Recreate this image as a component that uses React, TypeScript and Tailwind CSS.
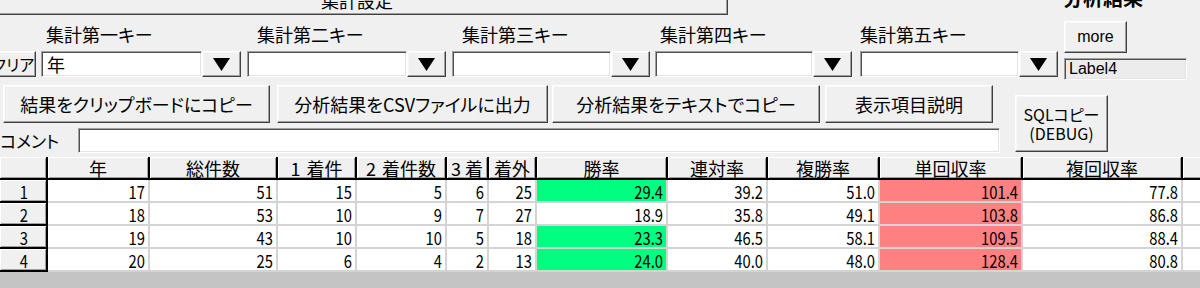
import React from "react";

const raised =
  "bg-[#f0f0f0] border border-t-white border-l-white border-r-[#404040] border-b-[#404040] shadow-[inset_-1px_-1px_0_#a0a0a0,inset_1px_1px_0_#f8f8f8]";
const sunken =
  "border border-t-[#a0a0a0] border-l-[#a0a0a0] border-r-white border-b-white shadow-[inset_1px_1px_0_#505050,inset_-1px_-1px_0_#e3e3e3]";

function Arrow() {
  return (
    <svg width="17" height="13" viewBox="0 0 17 13">
      <polygon points="0,0 17,0 8.5,13" fill="black" />
    </svg>
  );
}

function Combo({
  cls,
  labelCls,
  label,
  value,
}: {
  cls: string;
  labelCls: string;
  label: string;
  value?: string;
}) {
  return (
    <div className={`flex flex-col shrink-0 ${cls}`}>
      <div className={`h-[36px] pt-[10px] text-[18px] leading-[18px] whitespace-nowrap ${labelCls}`}>{label}</div>
      <div className="h-[26px] flex">
        <div className={`flex-1 bg-white ${sunken} text-[18px] leading-none flex items-center pl-[5px]`}>{value}</div>
        <div className={`w-[39px] shrink-0 ${raised} flex items-center justify-center`}>
          <Arrow />
        </div>
      </div>
    </div>
  );
}

const widths = [
  "w-[48px]",
  "w-[102px]",
  "w-[128px]",
  "w-[79px]",
  "w-[90px]",
  "w-[42px]",
  "w-[48px]",
  "w-[131px]",
  "w-[100px]",
  "w-[112px]",
  "w-[143px]",
  "w-[160px]",
  "w-[80px]",
];

const headers: React.ReactNode[] = [
  "",
  "年",
  "総件数",
  <>
    <span className="mr-[6px]">1</span>着件
  </>,
  <>
    <span className="mr-[6px]">2</span>着件数
  </>,
  <>
    <span className="mr-[4px]">3</span>着
  </>,
  "着外",
  "勝率",
  "連対率",
  "複勝率",
  "単回収率",
  "複回収率",
  "",
];

const rows = [
  ["1", "17", "51", "15", "5", "6", "25", "29.4", "39.2", "51.0", "101.4", "77.8", ""],
  ["2", "18", "53", "10", "9", "7", "27", "18.9", "35.8", "49.1", "103.8", "86.8", ""],
  ["3", "19", "43", "10", "10", "5", "18", "23.3", "46.5", "58.1", "109.5", "88.4", ""],
  ["4", "20", "25", "6", "4", "2", "13", "24.0", "40.0", "48.0", "128.4", "80.8", ""],
];

const fixedCell =
  "bg-[#f0f0f0] border-r-2 border-b-2 border-black shadow-[inset_1px_1px_0_#fff,inset_-1px_-1px_0_#a0a0a0]";

function Num({ v }: { v: string }) {
  return <span className="inline-block scale-x-[0.82] origin-right text-[18px] leading-none">{v}</span>;
}

export default function App() {
  return (
    <div className="w-[1200px] h-[288px] overflow-hidden bg-[#f0f0f0] font-['Noto_Sans_CJK_JP','Noto_Sans',sans-serif] text-black [font-feature-settings:'palt'] flex flex-col">
      {/* top strip */}
      <div className="h-[15px] flex items-start shrink-0">
        <div
          className={`w-[742px] h-[40px] -mt-[25px] -ml-[14px] shrink-0 ${raised} flex justify-center pt-[15px] text-[18px] leading-[18px]`}
        >
          集計設定
        </div>
        <div className="ml-[335px] -mt-[12px] text-[20px] leading-[20px] font-bold whitespace-nowrap">分析結果</div>
      </div>

      {/* keys row */}
      <div className="h-[65px] flex shrink-0">
        <div className="-ml-[10px] w-[46px] flex flex-col shrink-0">
          <div className="h-[36px]" />
          <div className={`h-[26px] ${raised} text-[16px] leading-none flex items-center justify-center`}>クリア</div>
        </div>
        <Combo cls="ml-[5px] w-[200px]" labelCls="pl-[5px]" label="集計第一キー" value="年" />
        <Combo cls="ml-[6px] w-[199px]" labelCls="pl-[10px]" label="集計第二キー" />
        <Combo cls="ml-[6px] w-[198px]" labelCls="pl-[10px]" label="集計第三キー" />
        <Combo cls="ml-[5px] w-[197px]" labelCls="pl-[5px]" label="集計第四キー" />
        <Combo cls="ml-[8px] w-[198px]" labelCls="pl-[0px]" label="集計第五キー" />
        <div className="ml-[6px] flex flex-col shrink-0">
          <div
            className={`mt-[6px] h-[32px] w-[63px] ${raised} font-['Liberation_Sans',sans-serif] text-[16px] leading-none flex items-center justify-center`}
          >
            more
          </div>
          <div
            className={`mt-[5px] h-[22px] w-[123px] bg-[#ececec] ${sunken} font-['Liberation_Sans',sans-serif] text-[16px] leading-none flex items-center pl-[4px]`}
          >
            Label4
          </div>
        </div>
      </div>

      {/* buttons + comment */}
      <div className="h-[77px] flex shrink-0">
        <div className="w-[1000px] flex flex-col shrink-0">
          <div className="mt-[5px] h-[38px] flex text-[18px] leading-none">
            <div className={`ml-[3px] w-[267px] ${raised} flex items-center justify-center whitespace-nowrap`}>
              結果をクリップボードにコピー
            </div>
            <div className={`ml-[7px] w-[271px] ${raised} flex items-center justify-center whitespace-nowrap`}>
              分析結果をCSVファイルに出力
            </div>
            <div className={`ml-[4px] w-[268px] ${raised} flex items-center justify-center whitespace-nowrap`}>
              分析結果をテキストでコピー
            </div>
            <div className={`ml-[5px] w-[168px] ${raised} flex items-center justify-center whitespace-nowrap`}>
              表示項目説明
            </div>
          </div>
          <div className="mt-[5px] h-[25px] flex items-center">
            <div className="w-[78px] shrink-0 text-[17px] leading-none whitespace-nowrap">コメント</div>
            <div className={`w-[922px] h-[25px] bg-white ${sunken}`} />
          </div>
        </div>
        <div
          className={`ml-[15px] mt-[15px] w-[93px] h-[57px] ${raised} flex flex-col items-center justify-center text-[16px] leading-[19px]`}
        >
          <div>SQLコピー</div>
          <div>(DEBUG)</div>
        </div>
      </div>

      {/* grid */}
      <div className="flex-1 flex flex-col bg-[#c4c4c4]">
        <div className="h-[23px] flex shrink-0">
          {headers.map((h, i) => (
            <div
              key={i}
              className={`${widths[i]} shrink-0 h-full ${fixedCell} flex items-center justify-center text-[18px] leading-none whitespace-nowrap`}
            >
              {h}
            </div>
          ))}
        </div>
        {rows.map((r, ri) => (
          <div key={ri} className="h-[23px] flex shrink-0">
            {r.map((v, ci) => {
              if (ci === 0) {
                return (
                  <div key={ci} className={`${widths[ci]} shrink-0 h-full ${fixedCell} flex items-center justify-center`}>
                    <Num v={v} />
                  </div>
                );
              }
              const green = ci === 7 && ri !== 1;
              const red = ci === 10;
              const bg = green ? "bg-[#00ff80]" : red ? "bg-[#ff8080]" : "bg-white";
              return (
                <div
                  key={ci}
                  className={`${widths[ci]} shrink-0 h-full ${bg} border-r-2 border-b-2 border-[#d4d4d4] flex items-center justify-end pr-[3px]`}
                >
                  <Num v={v} />
                </div>
              );
            })}
          </div>
        ))}
      </div>
    </div>
  );
}
